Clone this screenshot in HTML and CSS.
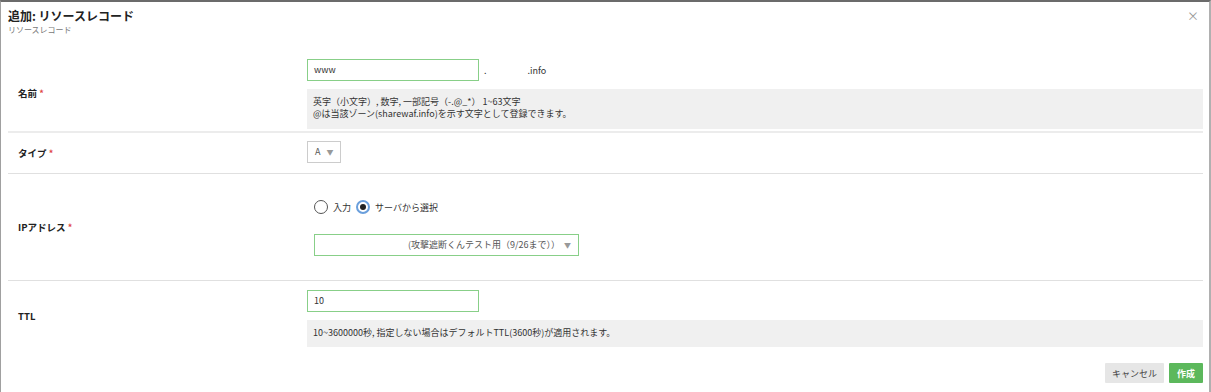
FILE: index.html
```html
<!DOCTYPE html>
<html lang="ja">
<head>
    <meta charset="UTF-8">
    <title>追加: リソースレコード</title>
    <link rel="stylesheet" href="styles.css">
</head>
<body>
    <div class="modal">
        <div class="modal-header">
            <h1>追加: リソースレコード</h1>
            <p class="subtitle">リソースレコード</p>
            <span class="close">×</span>
        </div>

        <div class="form-row first">
            <div class="label">名前 <span class="req">*</span></div>
            <div class="field">
                <div class="name-line">
                    <div class="text-input green">www</div>
                    <span class="dot">.</span>
                    <span class="zone">.info</span>
                </div>
                <div class="help">
                    英字（小文字）, 数字, 一部記号（-.@_*） 1~63文字<br>
                    @は当該ゾーン(sharewaf.info)を示す文字として登録できます。
                </div>
            </div>
        </div>

        <div class="form-row">
            <div class="label">タイプ <span class="req">*</span></div>
            <div class="field type-field">
                <div class="select-small">A <span class="caret">▼</span></div>
            </div>
        </div>

        <div class="form-row">
            <div class="label">IPアドレス <span class="req">*</span></div>
            <div class="field ip-field">
                <div class="radios">
                    <span class="radio"></span><span class="radio-label">入力</span>
                    <span class="radio checked"></span><span class="radio-label">サーバから選択</span>
                </div>
                <div class="select-wide">(攻撃遮断くんテスト用（9/26まで））<span class="caret">▼</span></div>
            </div>
        </div>

        <div class="form-row last">
            <div class="label">TTL</div>
            <div class="field">
                <div class="text-input green">10</div>
                <div class="help single">10~3600000秒, 指定しない場合はデフォルトTTL(3600秒)が適用されます。</div>
            </div>
        </div>

        <div class="modal-footer">
            <button class="btn btn-cancel">キャンセル</button>
            <button class="btn btn-create">作成</button>
        </div>
    </div>
</body>
</html>
```

FILE: styles.css
```css
* {
    margin: 0;
    padding: 0;
    box-sizing: border-box;
}

body {
    font-family: "Noto Sans CJK JP", "Noto Sans", sans-serif;
    font-size: 9px;
    color: #333;
    background: white;
}

.modal {
    height: 392px;
    border-top: 2px solid #6b6b6b;
    border-left: 1px solid #a0a0a0;
    border-right: 2px solid #b0b0b0;
    padding: 0 6px 0 7px;
}

.modal-header {
    position: relative;
    height: 53px;
    padding-top: 6px;
}

.modal-header h1 {
    font-size: 12px;
    font-weight: bold;
    line-height: 16px;
    color: #222;
}

.subtitle {
    font-size: 8px;
    line-height: 12px;
    color: #777;
}

.close {
    position: absolute;
    right: 4px;
    top: 5px;
    font-size: 12px;
    color: #999;
}

.form-row {
    display: grid;
    grid-template-columns: 299px 1fr;
    align-items: center;
    border-bottom: 1px solid #e0e0e0;
}

.form-row.first {
    border-bottom: 2px solid #ececec;
}

.form-row.last {
    border-bottom: none;
}

.label {
    padding-left: 10px;
    font-size: 9.5px;
    font-weight: bold;
    color: #222;
}

.req {
    color: #e04545;
    font-size: 9px;
}

.field {
    padding: 4px 0 2px;
}

.type-field {
    padding: 8px 0 10px;
}

.ip-field {
    padding: 26px 0 24px 7px;
}

.last .field {
    padding: 9px 0 4px;
}

.name-line {
    display: flex;
    align-items: center;
}

.text-input {
    width: 172px;
    height: 22px;
    line-height: 20px;
    padding-left: 6px;
    border: 1px solid #ccc;
    font-size: 9px;
    color: #333;
    background: white;
}

.text-input.green {
    border-color: #88cf88;
}

.dot {
    margin-left: 5px;
}

.zone {
    margin-left: 41px;
}

.help {
    margin-top: 8px;
    background: #f0f0f0;
    padding: 7px 6px 4px;
    font-size: 9px;
    line-height: 12px;
    color: #333;
    height: 40px;
}

.help.single {
    height: 27px;
    padding-top: 7px;
}

.select-small {
    width: 34px;
    height: 22px;
    line-height: 20px;
    padding-left: 7px;
    border: 1px solid #ccc;
    font-size: 9px;
    color: #555;
}

.caret {
    color: #999;
    font-size: 7px;
    margin-left: 4px;
}

.radios {
    display: flex;
    align-items: center;
    height: 14px;
}

.radio {
    width: 14px;
    height: 14px;
    border: 1px solid #555;
    border-radius: 50%;
    position: relative;
}

.radio.checked {
    border: 2px solid #6a9fdc;
}

.radio.checked::after {
    content: "";
    position: absolute;
    left: 2px;
    top: 2px;
    width: 6px;
    height: 6px;
    border-radius: 50%;
    background: #222;
}

.radio-label {
    margin: 0 5px 0 5px;
    font-size: 9px;
    color: #333;
}

.select-wide {
    margin-top: 20px;
    width: 265px;
    height: 22px;
    line-height: 20px;
    border: 1px solid #88cf88;
    text-align: right;
    padding-right: 7px;
    font-size: 9px;
    color: #555;
}

.modal-footer {
    display: flex;
    justify-content: flex-end;
    gap: 5px;
    padding-top: 12px;
}

.btn {
    height: 20px;
    border: none;
    font-family: inherit;
    font-size: 9px;
    padding: 0 7px;
    border-radius: 1px;
}

.btn-cancel {
    width: 59px;
    background: #e6e6e6;
    color: #444;
}

.btn-create {
    width: 34px;
    background: #5cb85c;
    color: white;
    font-weight: bold;
}
```
